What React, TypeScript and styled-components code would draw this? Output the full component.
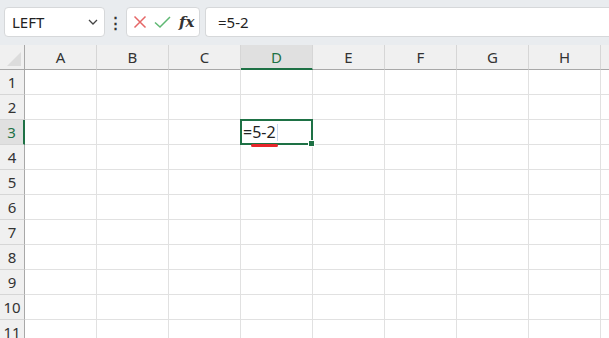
import React from "react";
import styled, { createGlobalStyle } from "styled-components";

const Global = createGlobalStyle`
  html, body { margin: 0; padding: 0; background: #fff; }
  body { width: 609px; height: 338px; overflow: hidden; font-family: "Noto Sans", "Liberation Sans", sans-serif; }
`;

const Page = styled.div`
  width: 609px;
  height: 338px;
  overflow: hidden;
  display: flex;
  flex-direction: column;
`;

const Toolbar = styled.div`
  flex-shrink: 0;
  height: 45px;
  box-sizing: border-box;
  background: #e9ecef;
  padding: 7px 0 8px 4px;
  display: flex;
  align-items: stretch;
`;

const Box = styled.div<{ $w?: number; $grow?: boolean }>`
  box-sizing: border-box;
  background: #fff;
  border: 1px solid #d6d8da;
  border-radius: 4px;
  display: flex;
  align-items: center;
  ${(p) => (p.$w ? `width: ${p.$w}px;` : "")}
  ${(p) => (p.$grow ? "flex: 1; border-right: none; border-radius: 4px 0 0 4px;" : "")}
`;

const NameText = styled.span`
  flex: 1;
  padding-left: 7px;
  font-size: 15px;
  color: #222;
  font-family: "Noto Sans", sans-serif;
`;

const Chevron = styled.svg`
  width: 12px;
  height: 12px;
  margin-right: 5px;
`;

const Dots = styled.div`
  width: 21px;
  display: flex;
  align-items: center;
  justify-content: center;
  font-size: 15px;
  font-weight: bold;
  color: #333;
`;

const IconGroup = styled(Box)`
  gap: 7px;
  padding-left: 6px;
  margin-right: 5px;
`;

const Fx = styled.span`
  font-family: "DejaVu Serif", "Liberation Serif", serif;
  font-style: italic;
  font-weight: bold;
  font-size: 15px;
  color: #333;
  margin-left: 1px;
`;

const FormulaText = styled.span`
  padding-left: 12px;
  font-size: 15px;
  color: #222;
`;

const Grid = styled.div`
  flex-shrink: 0;
  display: grid;
  grid-template-columns: 25px repeat(8, 72px) 72px;
  grid-auto-rows: 25px;
`;

const Corner = styled.div`
  box-sizing: border-box;
  background: #f0f0f0;
  border-right: 1px solid #a8a8a8;
  border-bottom: 1px solid #a8a8a8;
  position: relative;
  &::after {
    content: "";
    position: absolute;
    right: 3px;
    bottom: 3px;
    width: 0;
    height: 0;
    border-left: 14px solid transparent;
    border-bottom: 14px solid #dcdcdc;
  }
`;

const ColHead = styled.div<{ $active?: boolean }>`
  box-sizing: border-box;
  background: ${(p) => (p.$active ? "#e0e0e0" : "#f0f0f0")};
  border-right: 1px solid #d6d6d6;
  border-bottom: ${(p) => (p.$active ? "2px solid #1e7145" : "1px solid #a8a8a8")};
  display: flex;
  align-items: center;
  justify-content: center;
  font-size: 15px;
  color: ${(p) => (p.$active ? "#1e7145" : "#333")};
  padding-top: ${(p) => (p.$active ? "1px" : "0")};
`;

const RowHead = styled.div<{ $active?: boolean }>`
  box-sizing: border-box;
  background: ${(p) => (p.$active ? "#e0e0e0" : "#f0f0f0")};
  border-right: ${(p) => (p.$active ? "2px solid #1e7145" : "1px solid #a8a8a8")};
  border-bottom: 1px solid #d6d6d6;
  display: flex;
  align-items: center;
  justify-content: center;
  font-size: 15px;
  color: ${(p) => (p.$active ? "#1e7145" : "#333")};
`;

const Cell = styled.div`
  box-sizing: border-box;
  border-right: 1px solid #e1e1e1;
  border-bottom: 1px solid #e1e1e1;
  position: relative;
`;

const Selection = styled.div`
  position: absolute;
  left: -1px;
  top: -1px;
  right: -1px;
  bottom: -1px;
  border: 2px solid #1e7145;
  display: flex;
  align-items: center;
  padding-left: 1px;
  font-size: 16px;
  color: #222;
  z-index: 2;
  &::after {
    content: "";
    position: absolute;
    right: -4px;
    bottom: -4px;
    width: 5px;
    height: 5px;
    background: #1e7145;
    border: 1px solid #fff;
  }
`;

const Underlined = styled.span`
  position: relative;
  &::after {
    content: "";
    position: absolute;
    left: -1px;
    right: -2px;
    bottom: -4px;
    height: 3px;
    border-radius: 2px;
    background: #e8262b;
  }
`;

const Caret = styled.span`
  display: inline-block;
  width: 1px;
  height: 17px;
  background: #c8d8f0;
  margin-left: 1px;
`;

const cols = ["A", "B", "C", "D", "E", "F", "G", "H", ""];
const rows = Array.from({ length: 11 }, (_, i) => i + 1);

export default function App() {
  return (
    <Page>
      <Global />
      <Toolbar>
        <Box $w={101}>
          <NameText>LEFT</NameText>
          <Chevron viewBox="0 0 12 12">
            <path d="M2 4 L6 8 L10 4" fill="none" stroke="#444" strokeWidth="1.3" />
          </Chevron>
        </Box>
        <Dots>⋮</Dots>
        <IconGroup $w={74}>
          <svg width="14" height="14" viewBox="0 0 14 14">
            <path d="M1.5 1.5 L12.5 12.5 M12.5 1.5 L1.5 12.5" stroke="#e56767" strokeWidth="1.5" />
          </svg>
          <svg width="17" height="14" viewBox="0 0 17 14">
            <path d="M1 7.5 L6 12 L16 2" fill="none" stroke="#5fb873" strokeWidth="1.5" />
          </svg>
          <Fx>fx</Fx>
        </IconGroup>
        <Box $grow>
          <FormulaText>=5-2</FormulaText>
        </Box>
      </Toolbar>
      <Grid>
        <Corner />
        {cols.map((c, i) => (
          <ColHead key={i} $active={c === "D"}>
            {c}
          </ColHead>
        ))}
        {rows.map((r) => (
          <React.Fragment key={r}>
            <RowHead $active={r === 3}>{r}</RowHead>
            {cols.map((c, i) => (
              <Cell key={i}>
                {r === 3 && c === "D" && (
                  <Selection>
                    =<Underlined>5-2</Underlined>
                    <Caret />
                  </Selection>
                )}
              </Cell>
            ))}
          </React.Fragment>
        ))}
      </Grid>
    </Page>
  );
}
